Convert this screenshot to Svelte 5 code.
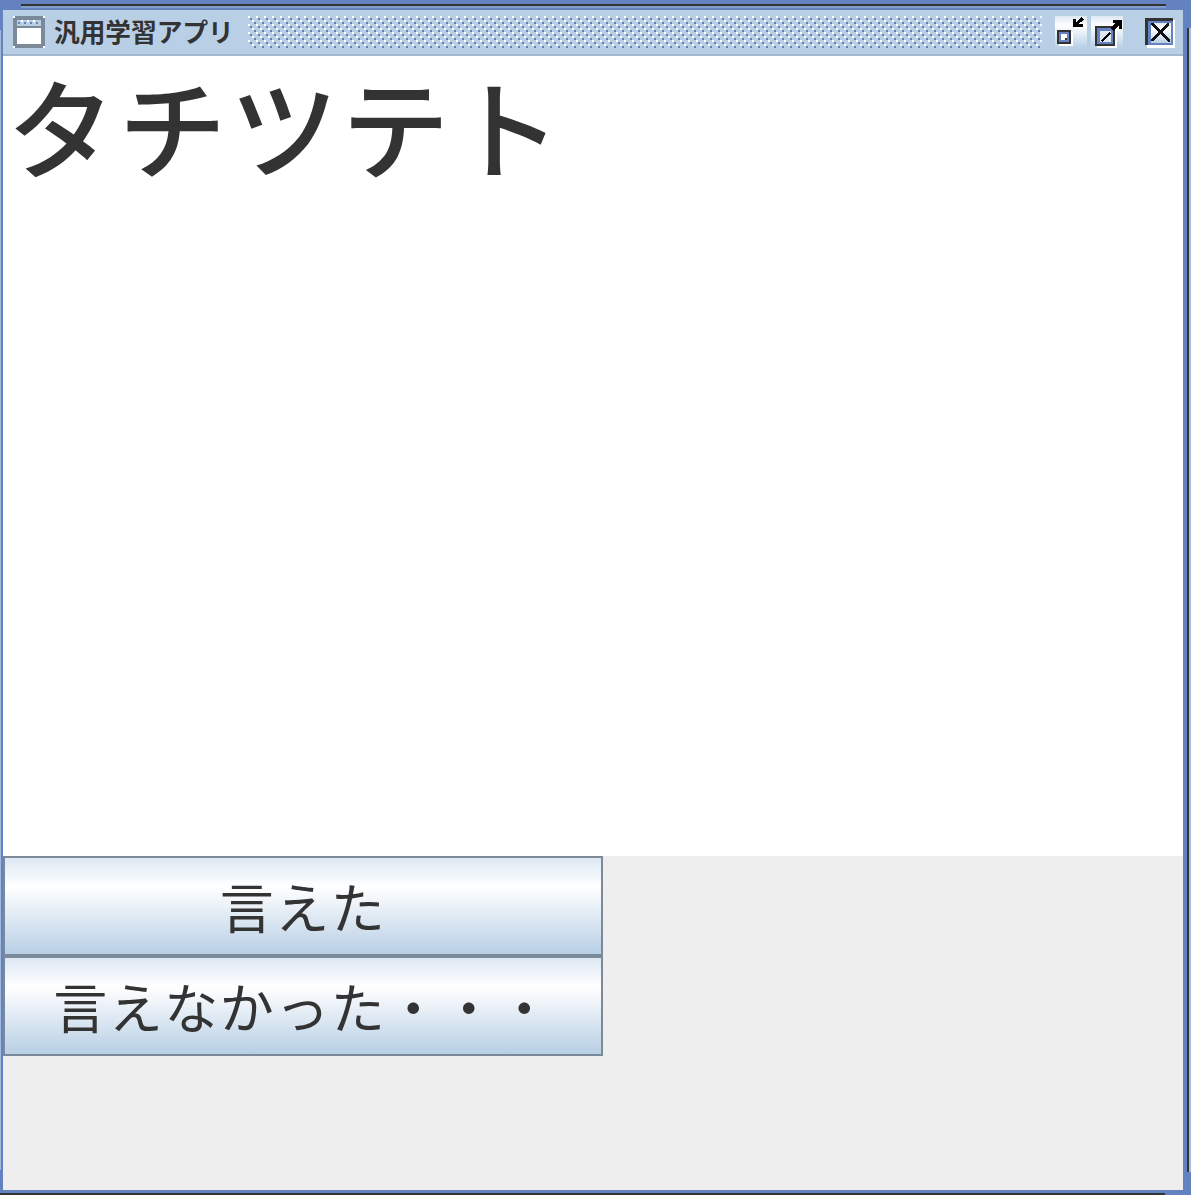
<script>
	const word = 'タチツテト';
	const answers = ['言えた', '言えなかった・・・'];
</script>

<div class="frame">
	<div class="edge-top"></div>
	<div class="edge-left"></div>
	<div class="edge-right"></div>
	<div class="edge-bottom"></div>

	<header class="titlebar">
		<svg class="win-icon" width="32" height="32" viewBox="0 0 32 32" shape-rendering="crispEdges">
			<rect x="0" y="0" width="32" height="32" fill="#7a8a99" />
			<rect x="0" y="0" width="2" height="2" fill="#fff" />
			<rect x="30" y="0" width="2" height="2" fill="#fff" />
			<rect x="0" y="30" width="2" height="2" fill="#fff" />
			<rect x="30" y="30" width="2" height="2" fill="#fff" />
			<rect x="4" y="4" width="24" height="6" fill="#b8cfe5" />
			<rect x="5" y="6" width="2" height="2" fill="#6382bf" />
			<rect x="11" y="6" width="2" height="2" fill="#6382bf" />
			<rect x="17" y="6" width="2" height="2" fill="#6382bf" />
			<rect x="23" y="6" width="2" height="2" fill="#6382bf" />
			<rect x="8" y="4" width="2" height="2" fill="#fff" />
			<rect x="14" y="4" width="2" height="2" fill="#fff" />
			<rect x="20" y="4" width="2" height="2" fill="#fff" />
			<rect x="4" y="12" width="24" height="16" fill="#fff" />
		</svg>
		<span class="title">汎用学習アプリ</span>
		<svg class="bumps">
			<defs>
				<pattern id="bump" width="8" height="8" patternUnits="userSpaceOnUse">
					<rect x="0" y="0" width="2" height="2" fill="#fff" />
					<rect x="2" y="2" width="2" height="2" fill="#6382bf" />
					<rect x="4" y="4" width="2" height="2" fill="#fff" />
					<rect x="6" y="6" width="2" height="2" fill="#6382bf" />
				</pattern>
			</defs>
			<rect width="100%" height="100%" fill="url(#bump)" />
		</svg>

		<div class="controls">
			<svg class="ctl" width="32" height="32" viewBox="0 0 32 32" shape-rendering="crispEdges">
				<defs>
					<linearGradient id="ctl-bg" x1="0" y1="0" x2="0" y2="1">
						<stop offset="0" stop-color="#dde8f3" />
						<stop offset="0.3" stop-color="#fff" />
						<stop offset="1" stop-color="#b8cfe5" />
					</linearGradient>
				</defs>
				<rect width="32" height="32" fill="url(#ctl-bg)" />
				<rect x="4" y="16" width="14" height="14" fill="#fff" />
				<rect x="2" y="14" width="14" height="14" fill="#333" />
				<rect x="4" y="16" width="10" height="10" fill="#6382bf" />
				<rect x="6" y="18" width="6" height="6" fill="#fff" />
				<rect x="10" y="22" width="2" height="2" fill="#333" />
				<path d="M18 3h3v4l5-6 3 3-6 4h5v3H18z" fill="#000" />
			</svg>
			<svg class="ctl" width="32" height="32" viewBox="0 0 32 32" shape-rendering="crispEdges">
				<rect width="32" height="32" fill="url(#ctl-bg)" />
				<rect x="6" y="12" width="20" height="20" fill="#fff" />
				<rect x="4" y="10" width="20" height="20" fill="#333" />
				<rect x="6" y="12" width="16" height="16" fill="#6382bf" />
				<rect x="9" y="15" width="11" height="11" fill="#dde8f3" />
				<path d="M10 24l8-8 2 1-9 9z" fill="#000" />
				<path d="M22 4h9v9h-3V9l-6 6-3-3 6-5h-3z" fill="#000" />
			</svg>
			<svg class="ctl close" width="32" height="32" viewBox="0 0 32 32" shape-rendering="crispEdges">
				<rect x="4" y="4" width="28" height="28" fill="#fff" />
				<rect x="2" y="2" width="28" height="27" fill="#333" />
				<rect x="5" y="5" width="25" height="24" fill="#6382bf" />
				<rect x="8" y="7" width="20" height="20" fill="url(#ctl-bg)" />
				<path d="M8 7h2l7 7 7-7h2v2l-7 7 8 8v2h-2l-8-8-7 7H8v-2l7-7-7-7z" fill="#111" />
			</svg>
		</div>
	</header>

	<main class="body">
		<section class="card">{word}</section>
		<section class="panel">
			<div class="buttons">
				{#each answers as label}
					<button type="button">{label}</button>
				{/each}
			</div>
		</section>
	</main>
</div>

<style>
	:global(body) {
		margin: 0;
	}

	.frame {
		position: relative;
		box-sizing: border-box;
		width: 1191px;
		height: 1195px;
		padding: 10px 8px 5px 3px;
		display: flex;
		flex-direction: column;
		background: #6382bf;
		font-family: 'Noto Sans CJK JP', 'Liberation Sans', sans-serif;
		color: #333;
		overflow: hidden;
	}

	.edge-top {
		position: absolute;
		left: 21px;
		top: 4px;
		width: 1145px;
		height: 2px;
		background: #333;
		box-shadow: 0 2px 0 #7f9ccb;
	}

	.edge-left {
		position: absolute;
		left: 0;
		top: 30px;
		width: 1px;
		height: 1140px;
		background: #a3bbd9;
	}

	.edge-right {
		position: absolute;
		left: 1187px;
		top: 28px;
		width: 2px;
		height: 1144px;
		background: #333;
		box-shadow: 2px 0 0 #a3bbd9;
	}

	.edge-bottom {
		position: absolute;
		left: 0;
		top: 1193px;
		width: 1165px;
		height: 2px;
		background: #333;
	}

	.titlebar {
		box-sizing: border-box;
		height: 46px;
		flex: none;
		display: flex;
		align-items: flex-start;
		padding: 6px 8px 0 10px;
		background: #b8cfe5;
		border-bottom: 2px solid #a3b8d0;
	}

	.win-icon {
		flex: none;
		margin-right: 9px;
	}

	.title {
		flex: none;
		width: 180px;
		margin-top: -3px;
		font-size: 25.7px;
		line-height: 36px;
		font-weight: 700;
		white-space: nowrap;
	}

	.bumps {
		flex: 1;
		min-width: 0;
		height: 32px;
		margin-left: 14px;
	}

	.controls {
		flex: none;
		display: flex;
		margin-left: 13px;
	}

	.ctl {
		display: block;
		margin-right: 4px;
	}

	.ctl.close {
		margin-left: 16px;
		margin-right: 0;
	}

	.body {
		flex: 1;
		min-height: 0;
		display: flex;
		flex-direction: column;
	}

	.card {
		box-sizing: border-box;
		height: 800px;
		flex: none;
		padding-left: 4px;
		background: #fff;
		font-size: 108px;
		font-weight: 500;
		letter-spacing: 3.5px;
		line-height: 136px;
		white-space: nowrap;
	}

	.panel {
		flex: 1;
		background: #eeeeee;
	}

	.buttons {
		display: flex;
		flex-direction: column;
		width: 600px;
	}

	button {
		box-sizing: border-box;
		width: 100%;
		height: 100px;
		padding: 0;
		border: 2px solid #7a8a99;
		background: linear-gradient(#dde8f3 0%, #fff 30%, #b8cfe5 100%);
		font-family: inherit;
		font-size: 54px;
		letter-spacing: 1.5px;
		line-height: 1;
		color: #333;
	}
</style>
